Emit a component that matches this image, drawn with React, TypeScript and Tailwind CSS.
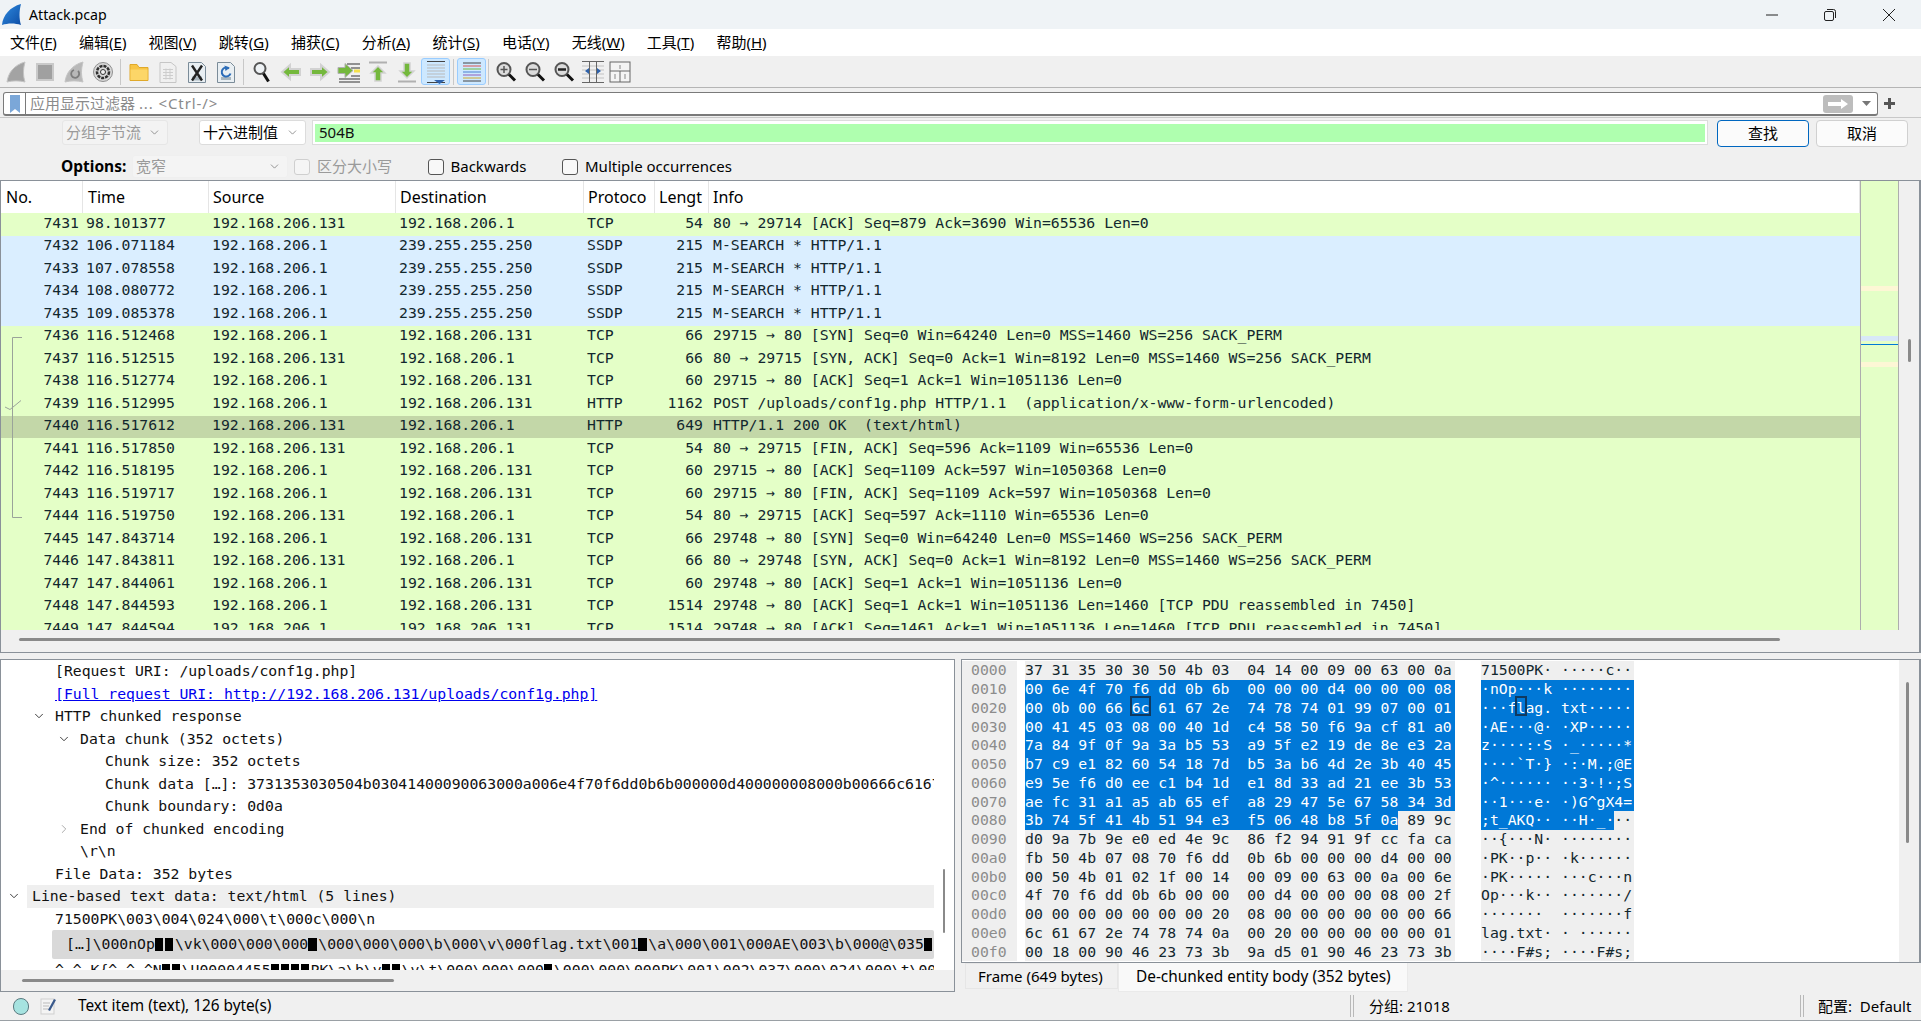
import React from "react";
import { ChevronDown, ChevronRight } from "lucide-react";

const UI = "font-['Noto_Sans','Noto_Sans_CJK_SC',sans-serif]";
const MONO = "font-['DejaVu_Sans_Mono','Liberation_Mono',monospace] text-[14.78px]";

const menus: [string, string][] = [
  ["文件(", "F"], ["编辑(", "E"], ["视图(", "V"], ["跳转(", "G"], ["捕获(", "C"], ["分析(", "A"],
  ["统计(", "S"], ["电话(", "Y"], ["无线(", "W"], ["工具(", "T"], ["帮助(", "H"],
];

const G = "bg-[#e4ffc7]";
const B = "bg-[#daeeff]";
const packets: [string, string, string, string, string, string, string, string][] = [
  ["7431", "98.101377", "192.168.206.131", "192.168.206.1", "TCP", "54", "80 → 29714 [ACK] Seq=879 Ack=3690 Win=65536 Len=0", G],
  ["7432", "106.071184", "192.168.206.1", "239.255.255.250", "SSDP", "215", "M-SEARCH * HTTP/1.1", B],
  ["7433", "107.078558", "192.168.206.1", "239.255.255.250", "SSDP", "215", "M-SEARCH * HTTP/1.1", B],
  ["7434", "108.080772", "192.168.206.1", "239.255.255.250", "SSDP", "215", "M-SEARCH * HTTP/1.1", B],
  ["7435", "109.085378", "192.168.206.1", "239.255.255.250", "SSDP", "215", "M-SEARCH * HTTP/1.1", B],
  ["7436", "116.512468", "192.168.206.1", "192.168.206.131", "TCP", "66", "29715 → 80 [SYN] Seq=0 Win=64240 Len=0 MSS=1460 WS=256 SACK_PERM", G],
  ["7437", "116.512515", "192.168.206.131", "192.168.206.1", "TCP", "66", "80 → 29715 [SYN, ACK] Seq=0 Ack=1 Win=8192 Len=0 MSS=1460 WS=256 SACK_PERM", G],
  ["7438", "116.512774", "192.168.206.1", "192.168.206.131", "TCP", "60", "29715 → 80 [ACK] Seq=1 Ack=1 Win=1051136 Len=0", G],
  ["7439", "116.512995", "192.168.206.1", "192.168.206.131", "HTTP", "1162", "POST /uploads/conf1g.php HTTP/1.1  (application/x-www-form-urlencoded)", G],
  ["7440", "116.517612", "192.168.206.131", "192.168.206.1", "HTTP", "649", "HTTP/1.1 200 OK  (text/html)", "bg-[#c3d7a8]"],
  ["7441", "116.517850", "192.168.206.131", "192.168.206.1", "TCP", "54", "80 → 29715 [FIN, ACK] Seq=596 Ack=1109 Win=65536 Len=0", G],
  ["7442", "116.518195", "192.168.206.1", "192.168.206.131", "TCP", "60", "29715 → 80 [ACK] Seq=1109 Ack=597 Win=1050368 Len=0", G],
  ["7443", "116.519717", "192.168.206.1", "192.168.206.131", "TCP", "60", "29715 → 80 [FIN, ACK] Seq=1109 Ack=597 Win=1050368 Len=0", G],
  ["7444", "116.519750", "192.168.206.131", "192.168.206.1", "TCP", "54", "80 → 29715 [ACK] Seq=597 Ack=1110 Win=65536 Len=0", G],
  ["7445", "147.843714", "192.168.206.1", "192.168.206.131", "TCP", "66", "29748 → 80 [SYN] Seq=0 Win=64240 Len=0 MSS=1460 WS=256 SACK_PERM", G],
  ["7446", "147.843811", "192.168.206.131", "192.168.206.1", "TCP", "66", "80 → 29748 [SYN, ACK] Seq=0 Ack=1 Win=8192 Len=0 MSS=1460 WS=256 SACK_PERM", G],
  ["7447", "147.844061", "192.168.206.1", "192.168.206.131", "TCP", "60", "29748 → 80 [ACK] Seq=1 Ack=1 Win=1051136 Len=0", G],
  ["7448", "147.844593", "192.168.206.1", "192.168.206.131", "TCP", "1514", "29748 → 80 [ACK] Seq=1 Ack=1 Win=1051136 Len=1460 [TCP PDU reassembled in 7450]", G],
  ["7449", "147.844594", "192.168.206.1", "192.168.206.131", "TCP", "1514", "29748 → 80 [ACK] Seq=1461 Ack=1 Win=1051136 Len=1460 [TCP PDU reassembled in 7450]", G],
];

const hexRows: [string, string, string][] = [
  ["0000", "37 31 35 30 30 50 4b 03  04 14 00 09 00 63 00 0a", "71500PK· ·····c··"],
  ["0010", "00 6e 4f 70 f6 dd 0b 6b  00 00 00 d4 00 00 00 08", "·nOp···k ········"],
  ["0020", "00 0b 00 66 6c 61 67 2e  74 78 74 01 99 07 00 01", "···flag. txt·····"],
  ["0030", "00 41 45 03 08 00 40 1d  c4 58 50 f6 9a cf 81 a0", "·AE···@· ·XP·····"],
  ["0040", "7a 84 9f 0f 9a 3a b5 53  a9 5f e2 19 de 8e e3 2a", "z····:·S ·_·····*"],
  ["0050", "b7 c9 e1 82 60 54 18 7d  b5 3a b6 4d 2e 3b 40 45", "····`T·} ·:·M.;@E"],
  ["0060", "e9 5e f6 d0 ee c1 b4 1d  e1 8d 33 ad 21 ee 3b 53", "·^······ ··3·!·;S"],
  ["0070", "ae fc 31 a1 a5 ab 65 ef  a8 29 47 5e 67 58 34 3d", "··1···e· ·)G^gX4="],
  ["0080", "3b 74 5f 41 4b 51 94 e3  f5 06 48 b8 5f 0a 89 9c", ";t_AKQ·· ··H·_···"],
  ["0090", "d0 9a 7b 9e e0 ed 4e 9c  86 f2 94 91 9f cc fa ca", "··{···N· ········"],
  ["00a0", "fb 50 4b 07 08 70 f6 dd  0b 6b 00 00 00 d4 00 00", "·PK··p·· ·k······"],
  ["00b0", "00 50 4b 01 02 1f 00 14  00 09 00 63 00 0a 00 6e", "·PK····· ···c···n"],
  ["00c0", "4f 70 f6 dd 0b 6b 00 00  00 d4 00 00 00 08 00 2f", "Op···k·· ·······/"],
  ["00d0", "00 00 00 00 00 00 00 20  08 00 00 00 00 00 00 66", "·······  ·······f"],
  ["00e0", "6c 61 67 2e 74 78 74 0a  00 20 00 00 00 00 00 01", "lag.txt· · ······"],
  ["00f0", "00 18 00 90 46 23 73 3b  9a d5 01 90 46 23 73 3b", "····F#s; ····F#s;"],
];

type TreeRow = { pad: string; chev?: "down" | "right"; text: React.ReactNode; inner?: string; h?: string };

// undisplayable bytes show up as small black bars in the reference
function Bars({ text }: { text: string }) {
  return (
    <>
      {text.split("█").map((part, i) => (
        <React.Fragment key={i}>
          {i > 0 && <span className="mr-[1.500px] inline-block h-[13px] w-[8.500px] flex-none bg-black" />}
          {part}
        </React.Fragment>
      ))}
    </>
  );
}

const treeRows: TreeRow[] = [
  { pad: "pl-[32px]", text: "[Request URI: /uploads/conf1g.php]" },
  { pad: "pl-[32px]", text: <span className="text-[#0000ee] underline">[Full request URI: http://192.168.206.131/uploads/conf1g.php]</span> },
  { pad: "pl-[32px]", chev: "down", text: "HTTP chunked response" },
  { pad: "pl-[57px]", chev: "down", text: "Data chunk (352 octets)" },
  { pad: "pl-[82px]", text: "Chunk size: 352 octets" },
  { pad: "pl-[82px]", text: "Chunk data […]: 3731353030504b03041400090063000a006e4f70f6dd0b6b000000d400000008000b00666c6167" },
  { pad: "pl-[82px]", text: "Chunk boundary: 0d0a" },
  { pad: "pl-[57px]", chev: "right", text: "End of chunked encoding" },
  { pad: "pl-[57px]", text: "\\r\\n" },
  { pad: "pl-[32px]", text: "File Data: 352 bytes" },
  { pad: "pl-[7px]", chev: "down", text: "Line-based text data: text/html (5 lines)", inner: "bg-[#efefef] pl-[5px]" },
  { pad: "pl-[32px]", text: "71500PK\\003\\004\\024\\000\\t\\000c\\000\\n" },
  {
    pad: "pl-[32px]",
    text: <Bars text={"[…]\\000nOp██\\vk\\000\\000\\000█\\000\\000\\000\\b\\000\\v\\000flag.txt\\001█\\a\\000\\001\\000AE\\003\\b\\000@\\035█"} />,
    inner: "bg-[#d9d9d9] pl-[14px] rounded-[2px]",
    h: "h-[29px]",
  },
  {
    pad: "pl-[32px]",
    text: <Bars text={"^ ^ K{^ ^ ^N██\\U00004455████PK\\a\\b\\v██\\v\\t\\000\\000\\000█\\000\\000\\000PK\\001\\002\\037\\000\\024\\000\\t\\000c"} />,
  },
];

function Icon({ children, size = 24 }: { children: React.ReactNode; size?: number }) {
  return (
    <svg width={size} height={size} viewBox="0 0 24 24" fill="none">
      {children}
    </svg>
  );
}

function Fin({ color = "#a3a3a3" }: { color?: string }) {
  return <path d="M3 22C4 13 10 5 21 2c-2 7-2 14 0 20-5-1.500-13-1.500-18 0z" fill={color} stroke="#c4c4c4" />;
}

const toolbarIcons: Record<string, React.ReactNode> = {
  start: <Fin />,
  stop: <rect x="4" y="4" width="16" height="16" fill="#a0a0a0" stroke="#c9c9c9" strokeWidth="2" />,
  restart: (
    <>
      <Fin color="#b8b8b8" />
      <path d="M16 11a4 4 0 1 1-4-1" stroke="#7c7c7c" strokeWidth="1.800" />
    </>
  ),
  gear: (
    <>
      <circle cx="12" cy="12" r="9.500" fill="#d8d8d8" stroke="#8f8f8f" />
      <circle cx="12" cy="12" r="6" stroke="#2f2f2f" strokeWidth="2.500" strokeDasharray="3 1" />
      <circle cx="12" cy="12" r="2.500" fill="#f2f2f2" stroke="#333" />
    </>
  ),
  folder: (
    <>
      <path d="M3 4.500h7l2 3h9v13H3z" fill="#f8c544" stroke="#e0a92a" />
      <rect x="3.500" y="9.500" width="17" height="10.500" fill="#fcd668" />
    </>
  ),
  file: (
    <>
      <path d="M4 2.500h11l5 4v16H4z" fill="#f0f0f0" stroke="#c6c6c6" />
      <path d="M7 9.500h10M7 12.500h10M7 15.500h10M7 18.500h10M10 8.500v11M14 8.500v11" stroke="#cdcdcd" />
    </>
  ),
  close: (
    <>
      <path d="M3.500 2.500h13l4 4v16h-17z" fill="#e9eff3" stroke="#7b8c99" />
      <path d="M7 18.500h10" stroke="#a9b6be" strokeWidth="4" />
      <path d="M7 5.500l10 15M17 5.500l-10 15" stroke="#222" strokeWidth="2.400" />
    </>
  ),
  reload: (
    <>
      <path d="M3.500 2.500h13l4 4v16h-17z" fill="#e9eff3" stroke="#7b8c99" />
      <path d="M7 18.500h10" stroke="#a9b6be" strokeWidth="3" />
      <path d="M16.500 13.500a4.500 4.500 0 1 1-1.500-5" stroke="#2b6cb8" strokeWidth="2" />
      <path d="M10.500 5.500l5 2.500-4 3z" fill="#2b6cb8" />
    </>
  ),
  find: (
    <>
      <circle cx="10" cy="8.500" r="5.500" fill="#eef2f5" stroke="#555" strokeWidth="2" />
      <path d="M13.500 13.500l5 8" stroke="#111" strokeWidth="3" />
    </>
  ),
  back: <path d="M3 12l8-7v4h10v6H11v4z" fill="#74b83c" stroke="#d2d2d2" strokeWidth="2" />,
  forward: <path d="M21 12l-8-7v4H3v6h10v4z" fill="#74b83c" stroke="#d2d2d2" strokeWidth="2" />,
  goto: (
    <>
      <path d="M10 4h13M14 8h9M14 16h9M2 19h21M2 22h21" stroke="#333" />
      <path d="M16 10.500l-8-7v4H1v6h7v4z" fill="#74b83c" stroke="#b0b0b0" />
      <rect x="17" y="9.500" width="6" height="3" fill="#f4e04a" />
    </>
  ),
  first: (
    <>
      <path d="M3 2.500h18" stroke="#b0b0b0" strokeWidth="2" />
      <path d="M12 6l7 7h-4v8H9v-8H5z" fill="#74b83c" stroke="#d2d2d2" strokeWidth="1.500" />
    </>
  ),
  last: (
    <>
      <path d="M3 21.500h18" stroke="#b0b0b0" strokeWidth="2" />
      <path d="M12 18l7-7h-4V3H9v8H5z" fill="#74b83c" stroke="#d2d2d2" strokeWidth="1.500" />
    </>
  ),
  auto: (
    <>
      <path d="M3 1.500h18" stroke="#444" />
      <path d="M3 5h18M3 8h18M3 11h18M3 14h18M3 17h18" stroke="#b9b9b9" />
      <path d="M3 22.500h18" stroke="#444" />
      <path d="M10 20h11l-5.500 4z" fill="#2e62ab" />
    </>
  ),
  color: (
    <>
      <path d="M3 3h18" stroke="#444" />
      <path d="M3 6h18" stroke="#d9534f" />
      <path d="M3 9h18" stroke="#71b843" />
      <path d="M3 12h18" stroke="#4a7fcf" />
      <path d="M3 15h18" stroke="#8f5fb8" />
      <path d="M3 18h18" stroke="#d0a62e" />
      <path d="M3 21h18" stroke="#444" />
    </>
  ),
  zoomIn: (
    <>
      <circle cx="10" cy="9.500" r="6.500" fill="#dcdcdc" stroke="#555" strokeWidth="2" />
      <path d="M6.500 9.500h7M10 6v7" stroke="#555" strokeWidth="1.500" />
      <path d="M15 14.500l6 6" stroke="#111" strokeWidth="3" />
    </>
  ),
  zoomOut: (
    <>
      <circle cx="10" cy="9.500" r="6.500" fill="#dcdcdc" stroke="#555" strokeWidth="2" />
      <path d="M6 9.500h8" stroke="#555" strokeWidth="1.500" />
      <path d="M15 14.500l6 6" stroke="#111" strokeWidth="3" />
    </>
  ),
  zoomReset: (
    <>
      <circle cx="10" cy="9.500" r="6.500" fill="#dcdcdc" stroke="#555" strokeWidth="2" />
      <path d="M6 9.500h8" stroke="#222" strokeWidth="2.500" />
      <path d="M15 14.500l6 6" stroke="#111" strokeWidth="3" />
    </>
  ),
  resize: (
    <>
      <path d="M1 6h22M1 10h22M1 14h22M1 18h22" stroke="#c2c2c2" />
      <path d="M1 1.500h22M1 22.500h22M8.500 1v22M15.500 1v22" stroke="#666" />
      <path d="M8 8v6l-4-3zM16 8v6l4-3z" fill="#2e62ab" />
    </>
  ),
  layout: (
    <>
      <rect x="2" y="2" width="20" height="20" fill="#f4f4f4" stroke="#666" />
      <path d="M2 11h20M12 11v11" stroke="#666" />
      <path d="M12 5v4M7 14v5M17 14v5" stroke="#888" />
    </>
  ),
};

function ToolButton({ name, active }: { name: string; active?: boolean }) {
  return (
    <div className="flex h-[31px] w-[29px] items-center justify-center">
      <div
        className={
          active
            ? "flex h-[27px] w-[29px] items-center justify-center rounded-[3px] border border-[#99ccff] bg-[#cde8ff]"
            : "flex h-[27px] w-[29px] items-center justify-center"
        }
      >
        <Icon>{toolbarIcons[name]}</Icon>
      </div>
    </div>
  );
}

function ToolSep({ narrow }: { narrow?: boolean }) {
  return (
    <div className={narrow ? "flex w-[5px] items-center justify-center" : "flex w-[7px] items-center justify-center"}>
      <div className="h-[26px] w-px bg-[#c8c8c8]" />
    </div>
  );
}

function Toolbar() {
  return (
    <div className="flex h-[31px] items-center bg-[#f0f0f0] pl-px">
      {["start", "stop", "restart", "gear"].map((n) => <ToolButton key={n} name={n} />)}
      <ToolSep />
      {["folder", "file", "close", "reload"].map((n) => <ToolButton key={n} name={n} />)}
      <ToolSep />
      {["find", "back", "forward", "goto", "first", "last"].map((n) => <ToolButton key={n} name={n} />)}
      <ToolButton name="auto" active />
      <ToolSep />
      <ToolButton name="color" active />
      <ToolSep narrow />
      {["zoomIn", "zoomOut", "zoomReset", "resize"].map((n) => <ToolButton key={n} name={n} />)}
      <div className="-ml-[2px]">
        <ToolButton name="layout" />
      </div>
    </div>
  );
}

function Combo({ label, cls, text }: { label: string; cls: string; text: string }) {
  return (
    <div className={`flex items-center justify-between rounded-[3px] border pl-[3px] pr-[6px] text-[15px] ${cls} ${text}`}>
      <span>{label}</span>
      <ChevronDown size={13} strokeWidth={1.4} className="text-[#777]" />
    </div>
  );
}

function Check({ label, disabled, width }: { label: string; disabled?: boolean; width: string }) {
  return (
    <div className={`flex items-center ${width} ${disabled ? "text-[#9a9a9a]" : "text-black"}`}>
      <div
        className={
          disabled
            ? "mr-[7px] h-[16px] w-[16px] flex-none rounded-[3px] border border-[#cfcfcf] bg-[#f5f5f5]"
            : "mr-[7px] h-[16px] w-[16px] flex-none rounded-[3px] border border-[#555] bg-[#f8f8f8]"
        }
      />
      <span className="whitespace-nowrap">{label}</span>
    </div>
  );
}

function PacketList() {
  const head: [string, string][] = [
    ["w-[82px] pl-[5px]", "No."],
    ["w-[126px] pl-[5px]", "Time"],
    ["w-[187px] pl-[4px]", "Source"],
    ["w-[188px] pl-[4px]", "Destination"],
    ["w-[71px] pl-[4px]", "Protoco"],
    ["w-[54px] pl-[4px]", "Lengt"],
    ["flex-1 pl-[4px]", "Info"],
  ];
  return (
    <div className="flex h-[473px] flex-col overflow-hidden border border-[#8a9199] border-r-[2px] bg-[#f0f0f0]">
      <div className="flex h-[449px]">
        <div className="w-[1859px] overflow-hidden bg-white">
          <div className="flex h-[32px] items-center text-[16px] text-black">
            {head.map(([c, t]) => (
              <div key={t} className={`flex h-full items-center overflow-hidden whitespace-nowrap border-r border-[#e5e5e5] ${c}`}>
                {t}
              </div>
            ))}
          </div>
          <div className={`relative ${MONO} text-[#12272e]`}>
            {packets.map((p) => (
              <div key={p[0]} className={`flex h-[22.500px] items-center whitespace-pre pb-[3px] ${p[7]}`}>
                <div className="w-[82px] pr-[4px] text-right">{p[0]}</div>
                <div className="w-[126px] pl-[3px]">{p[1]}</div>
                <div className="w-[187px] pl-[3px]">{p[2]}</div>
                <div className="w-[188px] pl-[3px]">{p[3]}</div>
                <div className="w-[71px] pl-[3px]">{p[4]}</div>
                <div className="w-[54px] pr-[6px] text-right">{p[5]}</div>
                <div className="flex-1 pl-[4px]">{p[6]}</div>
              </div>
            ))}
            {/* related packets bracket */}
            <svg className="absolute left-0 top-0" width="24" height="320" fill="none">
              <path d="M21 124.500H11.500V304.500H21" stroke="#9aa39a" />
              <path d="M4 194l5 2.500 11-9" stroke="#9aa39a" />
            </svg>
          </div>
        </div>
        <div className="w-[39px] border-x border-[#adadad] bg-[#e4ffc7]">
          <div className="mt-[105px] h-[5px] bg-[#fdf7d5]" />
          <div className="mt-[45px] h-[5px] bg-[#d8e8f8]" />
          <div className="mt-[3px] h-px bg-[#0078d7]" />
          <div className="mt-[17px] h-[5px] bg-[#fdf7d5]" />
        </div>
        <div className="flex-1 pl-[9px]">
          <div className="mt-[158px] h-[23px] w-[3px] rounded-full bg-[#8a8a8a]" />
        </div>
      </div>
      <div className="pl-[18px] pt-[8px]">
        <div className="h-[3px] w-[1761px] rounded-full bg-[#8a8a8a]" />
      </div>
    </div>
  );
}

function TreePane() {
  return (
    <div className="flex h-[333px] w-[955px] flex-col border border-[#8a9199] bg-[#f0f0f0]">
      <div className="flex h-[310px]">
        <div className={`w-[933px] overflow-hidden bg-white ${MONO} text-[#111]`}>
          {treeRows.map((r, i) => (
            <div key={i} className={`flex ${r.h ?? "h-[22.500px]"} items-center whitespace-pre ${r.pad}`}>
              <div className="flex w-[19px] flex-none items-center">
                {r.chev === "down" && <ChevronDown size={14} strokeWidth={1.6} className="-ml-[1px] text-[#333]" />}
                {r.chev === "right" && <ChevronRight size={14} strokeWidth={1.4} className="-ml-[1px] text-[#999]" />}
              </div>
              <div className={`flex h-full flex-1 items-center overflow-hidden ${r.inner ?? "pl-[3px]"}`}>
                {r.text}
              </div>
            </div>
          ))}
        </div>
        <div className="flex-1 bg-white pl-[9px]">
          <div className="mt-[209px] h-[64px] w-[2px] rounded-full bg-[#8a8a8a]" />
        </div>
      </div>
      <div className="pl-[21px] pt-[9px]">
        <div className="h-[3px] w-[372px] rounded-full bg-[#8a8a8a]" />
      </div>
    </div>
  );
}

function Piece({ text, mark, len }: { text: string; mark?: number; len?: number }) {
  if (mark === undefined || len === undefined) return <>{text}</>;
  return (
    <>
      <span>{text.slice(0, mark)}</span>
      <span className="relative">
        {text.slice(mark, mark + len)}
        <span className="absolute -left-[1.500px] -right-[1.500px] -top-[1px] h-[20px] border-[2px] border-[#10395f]" />
      </span>
      <span>{text.slice(mark + len)}</span>
    </>
  );
}

function ByteCell({ text, sel, width, mark, len }: { text: string; sel: number; width: string; mark?: number; len?: number }) {
  const full = sel === text.length;
  return (
    <div className={`flex h-[18.750px] items-center whitespace-pre bg-[#efefef] ${width}`}>
      {full && (
        <div className="flex h-full flex-1 items-center bg-[#0078d7] text-white">
          <Piece text={text} mark={mark} len={len} />
        </div>
      )}
      {!full && sel > 0 && (
        <>
          <div className="flex h-full items-center bg-[#0078d7] text-white">{text.slice(0, sel)}</div>
          <div>{text.slice(sel)}</div>
        </>
      )}
      {sel === 0 && text}
    </div>
  );
}

function HexPane() {
  return (
    <div className="flex h-[304px] border border-[#8a9199] border-r-[2px] bg-white">
      <div className={`flex-1 pt-px ${MONO} text-[#12272e]`}>
        {hexRows.map((r, i) => {
          const selHex = i >= 1 && i <= 7 ? r[1].length : i === 8 ? 42 : 0;
          const selAsc = i >= 1 && i <= 7 ? r[2].length : i === 8 ? 15 : 0;
          return (
            <div key={r[0]} className="flex">
              <div className="flex h-[18.750px] w-[55px] items-center bg-[#efefef] pl-[9px] text-[#8c8c8c]">{r[0]}</div>
              <div className="w-[8px]" />
              <ByteCell
                text={r[1]}
                sel={selHex}
                width="w-[430px]"
                mark={i === 2 ? 12 : undefined}
                len={i === 2 ? 2 : undefined}
              />
              <div className="w-[26px]" />
              <ByteCell
                text={r[2]}
                sel={selAsc}
                width="w-[153px]"
                mark={i === 2 ? 4 : undefined}
                len={i === 2 ? 1 : undefined}
              />
            </div>
          );
        })}
      </div>
      <div className="w-[20px] bg-[#f0f0f0] pl-[7px]">
        <div className="mt-[22px] h-[161px] w-[3px] rounded-full bg-[#8a8a8a]" />
      </div>
    </div>
  );
}

function App() {
  return (
    <div className={`flex h-[1021px] w-[1921px] flex-col overflow-hidden bg-[#f0f0f0] ${UI} text-[15px] text-black`}>
      {/* title bar */}
      <div className="flex h-[29px] items-center bg-[#eff3f6] pl-[2px]">
        <svg width="20" height="22" viewBox="0 0 20 22">
          <defs>
            <linearGradient id="fin" x1="0" y1="0" x2="1" y2="1">
              <stop offset="0" stopColor="#2f8be0" />
              <stop offset="1" stopColor="#0d4ea6" />
            </linearGradient>
          </defs>
          <path d="M0 21C1 11 8 3 19 0c-2 7-2 15 0 21-6-2-13-2-19 0z" fill="url(#fin)" />
        </svg>
        <span className="ml-[7px] text-[14.200px]">Attack.pcap</span>
        <div className="ml-auto flex items-center">
          <div className="flex w-[58px] justify-center">
            <svg width="14" height="14" fill="none"><path d="M1 7h12" stroke="#222" /></svg>
          </div>
          <div className="flex w-[58px] justify-center">
            <svg width="14" height="14" fill="none">
              <rect x="1.500" y="3.500" width="9" height="9" rx="1.500" stroke="#222" />
              <path d="M4 1.500h6.500a2 2 0 0 1 2 2V10" stroke="#222" />
            </svg>
          </div>
          <div className="flex w-[62px] justify-center pr-[2px]">
            <svg width="14" height="14" fill="none"><path d="M1 1l12 12M13 1L1 13" stroke="#222" /></svg>
          </div>
        </div>
      </div>

      {/* menu */}
      <div className="flex h-[27px] items-center bg-white">
        {menus.map(([a, k]) => (
          <div key={k} className="whitespace-nowrap pl-[10px] pr-[12.200px] text-[15px]">
            {a}
            <span className="underline">{k}</span>)
          </div>
        ))}
      </div>

      <Toolbar />
      <div className="h-px bg-[#b5b5b5]" />

      {/* display filter */}
      <div className="flex h-[29px] items-start pl-[3px] pt-[4px]">
        <div className="flex h-[24px] w-[1875px] items-center rounded-[3px] border border-[#7a7a7a] border-b-[2px] bg-white">
          <div className="flex h-full w-[22px] items-center justify-center border-r border-[#7a7a7a]">
            <svg width="12" height="18" viewBox="0 0 12 18">
              <path d="M1 0h10v18l-5-4-5 4z" fill="#7ba7d8" />
            </svg>
          </div>
          <span className="ml-[4px] text-[15px] text-[#8a8a8a]">
            应用显示过滤器 <span className="tracking-[0.900px]">... &lt;Ctrl-/&gt;</span>
          </span>
          <div className="ml-auto flex h-[18px] w-[30px] items-center justify-center rounded-[3px] bg-[#bdbdbd]">
            <svg width="22" height="12" viewBox="0 0 22 12" fill="none">
              <path d="M1 4h13V1l7 5-7 5V8H1z" fill="#fff" />
            </svg>
          </div>
          <svg className="ml-[9px] mr-[6px]" width="9" height="6" viewBox="0 0 9 6">
            <path d="M0 0h9L4.500 5z" fill="#777" />
          </svg>
        </div>
        <svg className="ml-[6px] mt-[6px]" width="11" height="11" viewBox="0 0 11 11">
          <path d="M4 0h3v4h4v3H7v4H4V7H0V4h4z" fill="#555" />
        </svg>
      </div>
      <div className="h-px bg-[#c8c8c8]" />

      {/* find bar */}
      <div className="flex h-[30px] items-start pl-[62px] pt-[2px]">
        <Combo label="分组字节流" cls="h-[25px] w-[106px] border-[#e6e6e6] bg-[#f3f3f3]" text="text-[#9a9a9a]" />
        <div className="w-[31px]" />
        <Combo label="十六进制值" cls="h-[25px] w-[107px] border-[#dcdcdc] bg-white" text="text-black" />
        <div className="ml-[6px] flex h-[25px] w-[1396px] items-center border border-[#dcdcdc] bg-white px-[2px]">
          <div className="flex h-[18px] w-full items-center bg-[#afffaf] pl-[4px] text-[15px] text-[#111]">504B</div>
        </div>
        <div className="ml-[9px] flex h-[27px] w-[92px] items-center justify-center rounded-[4px] border border-[#0067c0] bg-[#fbfbfb]">查找</div>
        <div className="ml-[7px] flex h-[27px] w-[92px] items-center justify-center rounded-[4px] border border-[#d0d0d0] bg-[#fbfbfb]">取消</div>
      </div>

      {/* options */}
      <div className="flex h-[32px] items-start pl-[61px] pt-[7px]">
        <div className="flex h-[23px] w-[71px] items-center text-[15.500px] font-bold">Options:</div>
        <Combo label="宽窄" cls="h-[23px] w-[156px] border-[#efefef] bg-[#f4f4f4]" text="text-[#9a9a9a]" />
        <div className="ml-[6px] flex h-[23px]">
          <Check label="区分大小写" disabled width="w-[133.500px]" />
          <Check label="Backwards" width="w-[134.500px]" />
          <Check label="Multiple occurrences" width="w-[200px]" />
        </div>
      </div>

      <PacketList />
      <div className="h-[6px]" />

      <div className="flex h-[333px]">
        <TreePane />
        <div className="w-[6px]" />
        <div className="flex-1">
          <HexPane />
          <div className="flex h-[29px] pl-[4px] text-[15px]">
            <div className="flex h-[26px] w-[153px] items-center border border-[#e6e6e6] bg-[#f0f0f0] pl-[12px]">
              Frame (649 bytes)
            </div>
            <div className="flex h-[29px] w-[290px] items-center border border-t-0 border-[#eaeaea] bg-[#f9f9f9] pl-[17px] text-[15.400px]">
              De-chunked entity body (352 bytes)
            </div>
          </div>
        </div>
      </div>

      {/* status bar */}
      <div className="flex h-[29px] items-center border-b border-[#9aa0a5] pl-[13px] text-[15px]">
        <div className="h-[17px] w-[16px] rounded-full border border-[#5a7a80] bg-[#a6e3e0]" />
        <svg className="ml-[11px]" width="17" height="18" viewBox="0 0 17 18" fill="none">
          <rect x="1" y="2" width="13" height="15" fill="#f4f4f4" stroke="#cfcfcf" />
          <path d="M3 6h7M3 9h6M3 12h6" stroke="#bbb" />
          <path d="M8 13l6-11 2 1-6 11z" fill="#3a5a8c" />
        </svg>
        <span className="ml-[21px] w-[1272px] whitespace-nowrap text-[15.400px]">Text item (text), 126 byte(s)</span>
        <div className="h-[22px] w-[4px] border-x border-[#b8b8b8]" />
        <span className="ml-[15px] w-[431px] whitespace-nowrap">分组: 21018</span>
        <div className="h-[22px] w-[4px] border-x border-[#b8b8b8]" />
        <span className="ml-[14px] whitespace-pre">配置:  Default</span>
      </div>
    </div>
  );
}

export default App;
